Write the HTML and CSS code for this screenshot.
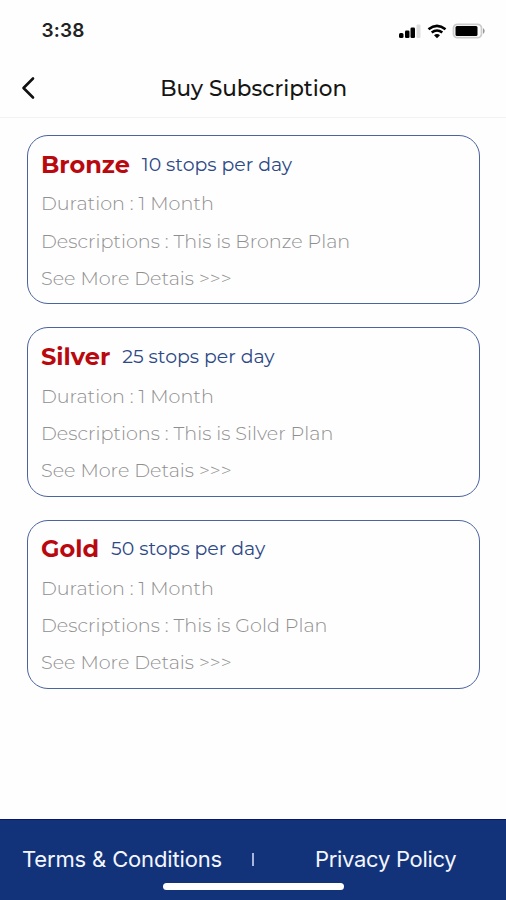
FILE: index.html
```html
<!DOCTYPE html>
<html lang="en">
<head>
<meta charset="utf-8">
<meta name="viewport" content="width=device-width, initial-scale=1">
<title>Buy Subscription</title>
<link rel="stylesheet" href="styles.css">
</head>
<body>
<div class="screen">
  <div class="status">
    <span class="time">3:38</span>
    <svg class="indicators" width="88" height="18" viewBox="0 0 88 18" aria-hidden="true">
      <rect x="1" y="11" width="4.500" height="5" rx="1.500"/>
      <rect x="7" y="8.500" width="4.500" height="7.500" rx="1.300"/>
      <rect x="12.500" y="5.500" width="4.500" height="10.500" rx="1.300"/>
      <rect x="18.500" y="2.500" width="4" height="13.500" rx="1.300" fill="#ddd"/>
      <path d="M30.500 7.200Q39 .4 47.500 7.200M33.700 10.600Q39 6.400 44.300 10.600" fill="none" stroke="#000" stroke-width="2.600"/>
      <path d="M36 13.200Q39 11 42 13.200L39 16.300Z"/>
      <rect x="55.500" y="2.300" width="28" height="13.400" rx="4" fill="#fff" stroke="#ccc" stroke-width="1.800"/>
      <rect x="57.500" y="4" width="22" height="10" rx="1.500"/>
      <path d="M85 6Q88.500 9 85 12Z" fill="#999"/>
    </svg>
  </div>
  <header class="nav">
    <svg class="back" width="16" height="24" viewBox="0 0 16 24" aria-label="Back"><path d="M13 2.500 3.500 12l9.500 9.500" fill="none" stroke="#111" stroke-width="2.600" stroke-linecap="round" stroke-linejoin="round"/></svg>
    <h1 class="title">Buy Subscription</h1>
  </header>
  <main class="plans">
    <section class="card">
      <div class="head"><h2 class="name">Bronze</h2><span class="stops">10 stops per day</span></div>
      <p class="line">Duration : 1 Month</p>
      <p class="line">Descriptions : This is Bronze Plan</p>
      <p class="line">See More Detais &gt;&gt;&gt;</p>
    </section>
    <section class="card">
      <div class="head"><h2 class="name">Silver</h2><span class="stops">25 stops per day</span></div>
      <p class="line">Duration : 1 Month</p>
      <p class="line">Descriptions : This is Silver Plan</p>
      <p class="line">See More Detais &gt;&gt;&gt;</p>
    </section>
    <section class="card">
      <div class="head"><h2 class="name">Gold</h2><span class="stops">50 stops per day</span></div>
      <p class="line">Duration : 1 Month</p>
      <p class="line">Descriptions : This is Gold Plan</p>
      <p class="line">See More Detais &gt;&gt;&gt;</p>
    </section>
  </main>
  <footer class="footer">
    <div class="links"><span class="terms">Terms &amp; Conditions</span><span class="divider"></span><span class="privacy">Privacy Policy</span></div>
    <div class="home"></div>
  </footer>
</div>
</body>
</html>
```
FILE: styles.css
```css
* { box-sizing: border-box; }
body { margin: 0; background: #fefefe; font-family: Montserrat, Inter, sans-serif; }
h1, h2, p { margin: 0; }
.screen { height: 900px; display: flex; flex-direction: column; overflow: hidden; }
.status { height: 59px; flex: none; display: flex; justify-content: space-between; padding: 19px 20px 0 41.500px; }
.time { font: 600 19px/24px Inter, sans-serif; letter-spacing: .2px; color: #222; }
.indicators { margin-top: 3px; }
.nav { height: 59px; flex: none; display: flex; align-items: center; padding-left: 20px; border-bottom: 1.500px solid #f1f1f1; }
.back { flex: none; }
.title { margin-left: 124.300px; font-size: 21.500px; line-height: 28px; font-weight: 500; color: #151515; white-space: nowrap; }
.plans { flex: 1; display: flex; flex-direction: column; gap: 23px; padding: 17px 26px 0 27px; }
.card { height: 169.300px; border: 1.500px solid #4b64a0; border-radius: 21px; padding: 10px 13px; white-space: nowrap; }
.head { display: flex; align-items: center; height: 37px; margin-bottom: 2.300px; }
.name { font-size: 24px; line-height: 34px; font-weight: 700; color: #b9090f; }
.stops { margin-left: 12px; font-size: 18.900px; line-height: 34px; color: #2d4987; }
.line { font-size: 19.150px; line-height: 37.300px; font-weight: 300; color: #8f8f8f; }
.footer { height: 81px; flex: none; background: #12337a; border-top: 1px solid #07166a; color: #f4f6ff; display: flex; flex-direction: column; align-items: center; }
.links { width: 100%; height: 63px; padding: 15px 0 0 22px; display: flex; align-items: center; font: 400 22px/30px Inter, sans-serif; letter-spacing: -.15px; white-space: nowrap; }
.terms { width: 230px; }
.divider { width: 2px; height: 13px; background: #a9b5dc; }
.privacy { margin-left: 61px; letter-spacing: -.3px; }
.home { width: 181px; height: 7px; border-radius: 4px; background: #fff; margin-left: 1px; }
```
